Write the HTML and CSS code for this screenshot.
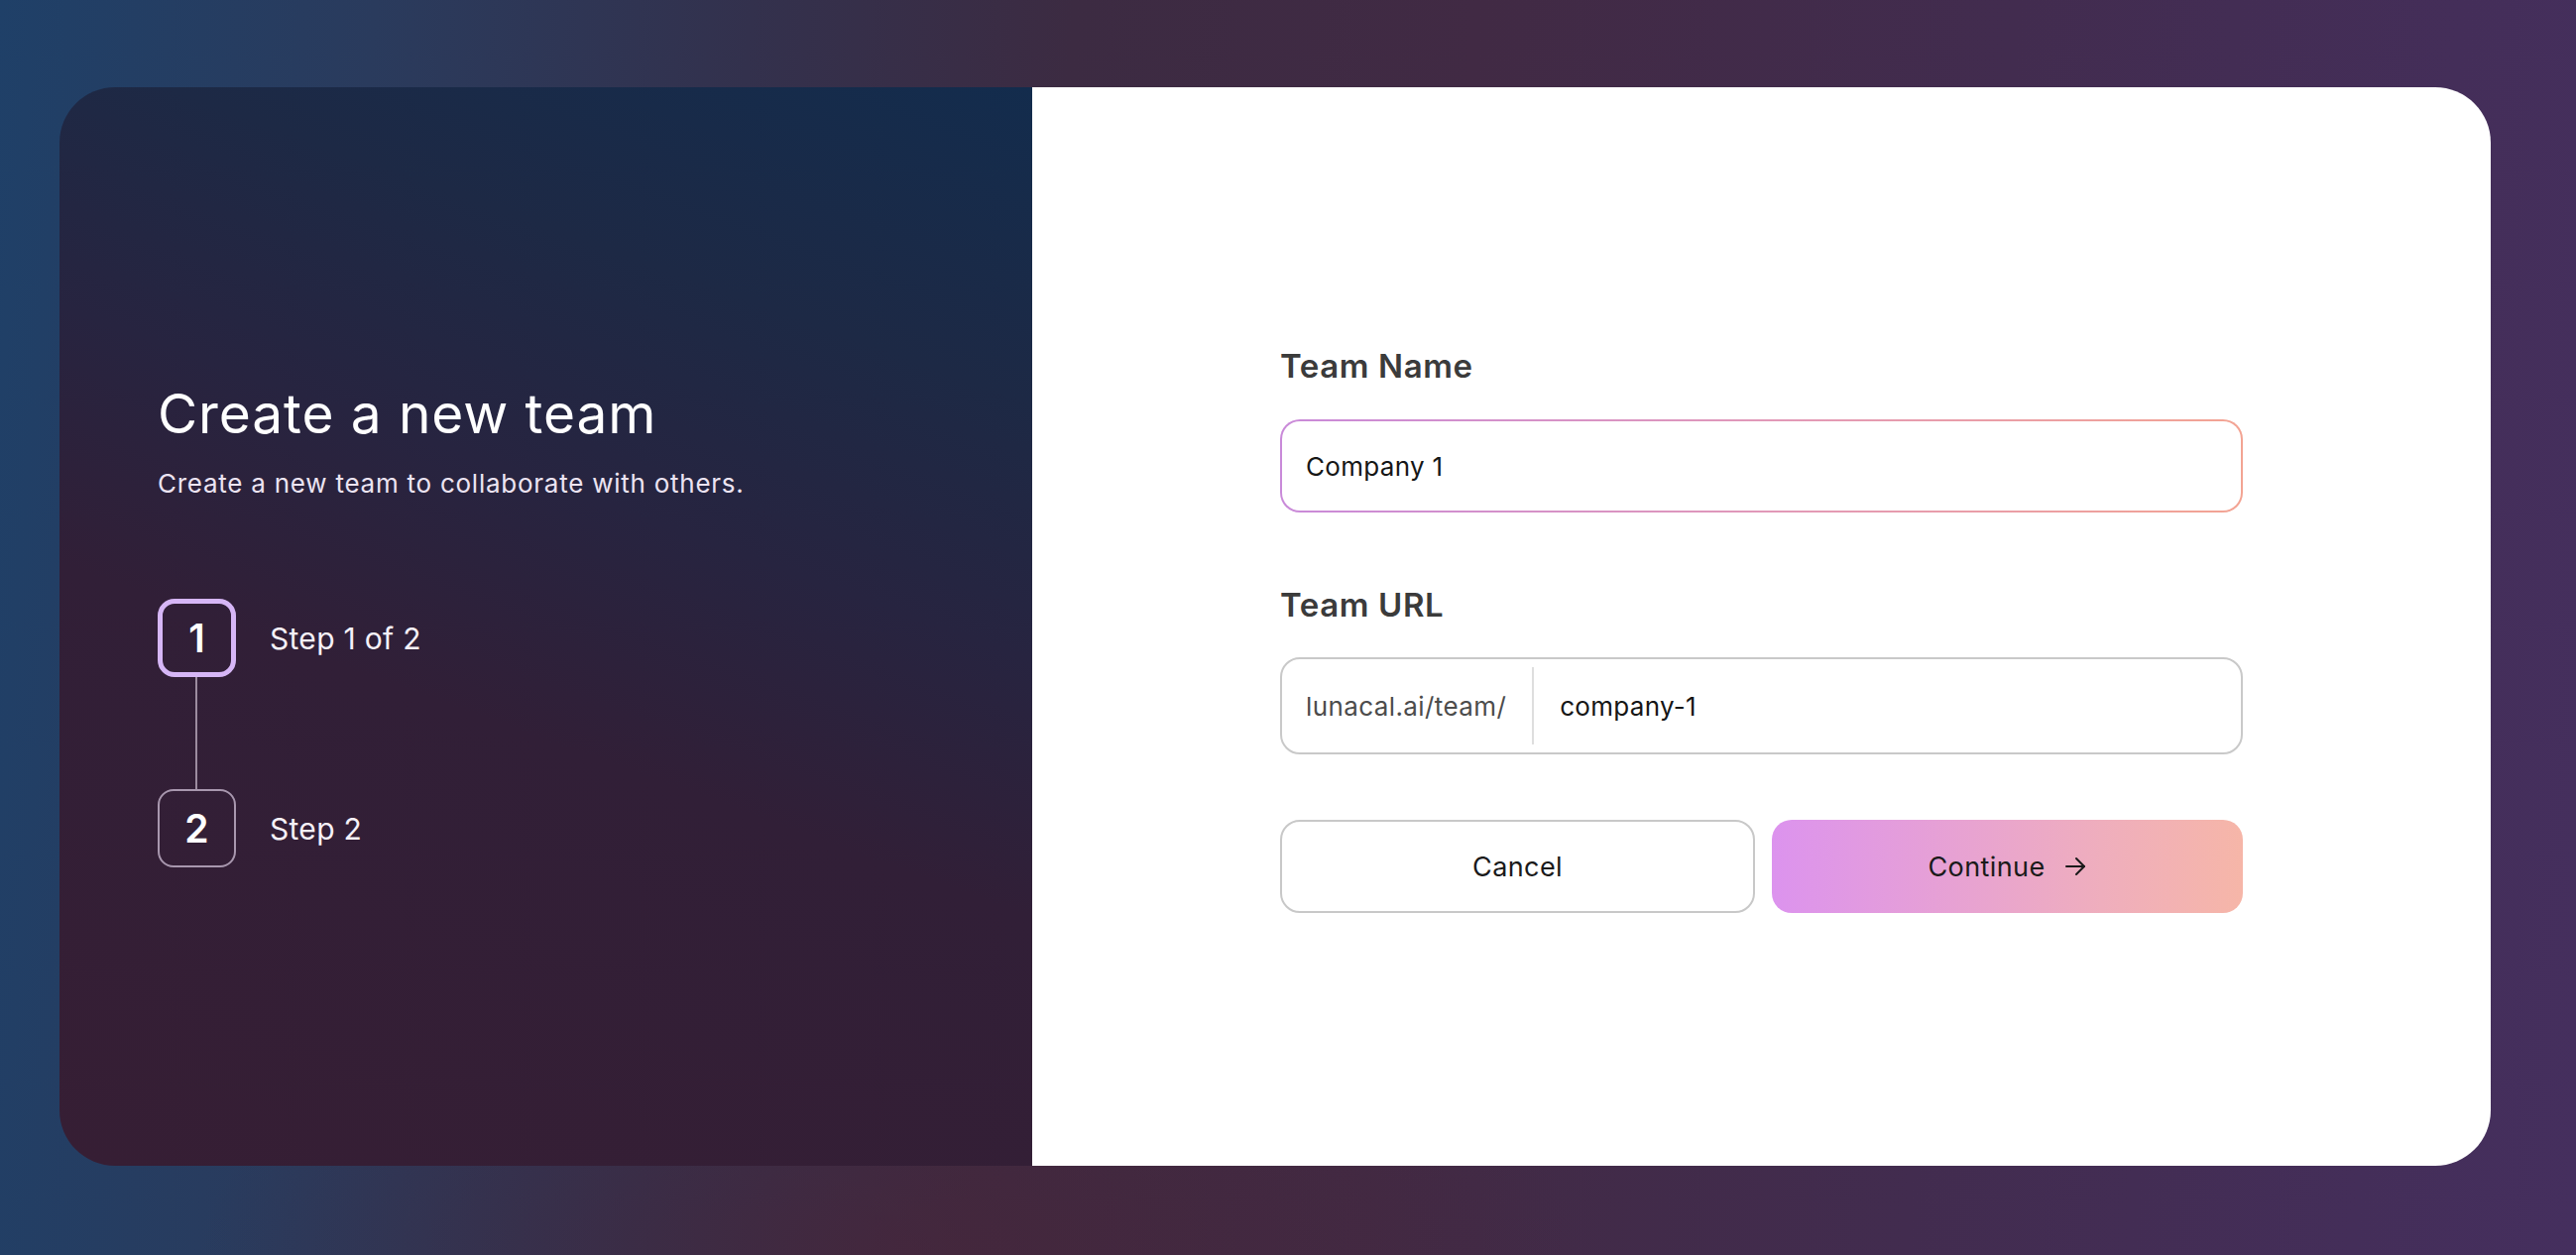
FILE: index.html
```html
<!DOCTYPE html>
<html lang="en">
<head>
<meta charset="utf-8">
<title>Create a new team</title>
<link rel="stylesheet" href="styles.css">
</head>
<body>
<div class="page">
  <div class="card">
    <section class="intro">
      <div class="intro-inner">
        <h1 class="title">Create a new team</h1>
        <p class="subtitle">Create a new team to collaborate with others.</p>
        <ol class="steps">
          <li class="step step-active">
            <span class="step-num">1</span>
            <span class="step-label">Step 1 of 2</span>
          </li>
          <li class="step-line" aria-hidden="true"></li>
          <li class="step">
            <span class="step-num">2</span>
            <span class="step-label">Step 2</span>
          </li>
        </ol>
      </div>
    </section>
    <section class="form-panel">
      <form class="form">
        <label class="field-label" for="team-name">Team Name</label>
        <div class="input-gradient">
          <div class="input-inner">
            <span class="input-value" id="team-name">Company 1</span>
          </div>
        </div>
        <label class="field-label label-url">Team URL</label>
        <div class="url-input">
          <span class="url-prefix">lunacal.ai/team/</span>
          <span class="url-divider"></span>
          <span class="url-value">company-1</span>
        </div>
        <div class="actions">
          <button type="button" class="btn btn-cancel">Cancel</button>
          <button type="button" class="btn btn-continue">Continue
            <svg class="arrow" width="24" height="22" viewBox="0 0 24 22" fill="none" stroke="#1a1a1a" stroke-width="2" stroke-linecap="round" stroke-linejoin="round"><path d="M3 11h18"/><path d="M13 3l8 8-8 8"/></svg>
          </button>
        </div>
      </form>
    </section>
  </div>
</div>
</body>
</html>
```
FILE: styles.css
```css
* { box-sizing: border-box; }
html, body { margin: 0; padding: 0; }
body {
  font-family: "Inter", "DejaVu Sans", sans-serif;
  width: 2598px;
  height: 1266px;
  overflow: hidden;
}
.page {
  width: 100%;
  height: 100%;
  padding: 88px 86px 90px 60px;
  background:
    radial-gradient(ellipse 700px 300px at 900px 1266px, rgba(75, 35, 55, 0.55), rgba(75,35,55,0) 100%),
    linear-gradient(95deg, #1f4068 0%, #2a3b5d 14%, #33314d 28%, #3c2b42 40%, #412a44 55%, #422c4f 75%, #452f5e 100%);
}
.card {
  display: flex;
  width: 100%;
  height: 100%;
  border-radius: 56px;
  overflow: hidden;
}
.intro {
  width: 981px;
  flex: none;
  display: flex;
  align-items: center;
  padding-left: 99px;
  background: linear-gradient(200deg, #132c4d 0%, #1d2945 22%, #272440 40%, #311f37 58%, #361e34 100%);
  color: #fff;
}
.intro-inner { margin-top: -4px; }
.title {
  margin: 0;
  font-size: 55px;
  line-height: 64px;
  font-weight: 400;
  letter-spacing: 0.9px;
  color: #ffffff;
}
.subtitle {
  margin: 21px 0 0;
  font-size: 26px;
  line-height: 36px;
  font-weight: 400;
  letter-spacing: 0.75px;
  color: #ece4f2;
}
.steps {
  list-style: none;
  margin: 98px 0 0;
  padding: 0;
  display: flex;
  flex-direction: column;
}
.step {
  display: flex;
  align-items: center;
  gap: 34px;
}
.step-num {
  width: 79px;
  height: 79px;
  flex: none;
  display: flex;
  align-items: center;
  justify-content: center;
  border: 2px solid #a897ae;
  border-radius: 16px;
  font-size: 39px;
  font-weight: 600;
  color: #fff;
}
.step-active .step-num {
  border: 5px solid #d6b6f6;
  border-radius: 17px;
}
.step-label {
  font-size: 30px;
  font-weight: 400;
  letter-spacing: 0.3px;
  color: #f6f1f8;
}
.step-line {
  width: 2px;
  height: 113px;
  margin-left: 38px;
  background: #9c8c9f;
}
.form-panel {
  flex: 1;
  background: #fff;
  display: flex;
  align-items: center;
  justify-content: center;
}
.form {
  width: 971px;
  display: flex;
  flex-direction: column;
  margin-top: 6px;
}
.field-label {
  font-size: 33px;
  line-height: 40px;
  font-weight: 600;
  color: #3b3b3b;
  letter-spacing: 0.6px;
}
.input-gradient {
  margin-top: 34px;
  height: 94px;
  padding: 2px;
  border-radius: 20px;
  background: linear-gradient(90deg, #c98ad9 0%, #e39ab5 55%, #f3a493 100%);
}
.input-inner {
  height: 100%;
  border-radius: 18px;
  background: #fff;
  display: flex;
  align-items: center;
  padding-left: 24px;
}
.input-value {
  font-size: 26px;
  letter-spacing: 0.3px;
  color: #161616;
}
.label-url { margin-top: 73px; }
.url-input {
  margin-top: 33px;
  height: 98px;
  border: 2px solid #c9c9c9;
  border-radius: 20px;
  display: flex;
  align-items: stretch;
  padding: 8px 0;
}
.url-prefix {
  display: flex;
  align-items: center;
  padding: 0 26px 0 24px;
  font-size: 26px;
  letter-spacing: 0.4px;
  color: #4c4c4c;
}
.url-divider {
  width: 2px;
  background: #dedede;
}
.url-value {
  display: flex;
  align-items: center;
  padding-left: 26px;
  font-size: 26px;
  letter-spacing: 0.3px;
  color: #161616;
}
.actions {
  margin-top: 66px;
  display: flex;
  gap: 17px;
}
.btn {
  flex: 1;
  height: 94px;
  border-radius: 20px;
  font-family: inherit;
  font-size: 27px;
  font-weight: 400;
  letter-spacing: 0.4px;
  color: #1a1a1a;
  display: flex;
  align-items: center;
  justify-content: center;
  gap: 18px;
  cursor: pointer;
}
.btn-cancel {
  background: #fff;
  border: 2px solid #c8c8c8;
}
.btn-continue {
  border: none;
  background: linear-gradient(90deg, #dc93ee 0%, #e6a0d6 35%, #efaebd 70%, #f6b6a8 100%);
}
.arrow { display: block; }
```
